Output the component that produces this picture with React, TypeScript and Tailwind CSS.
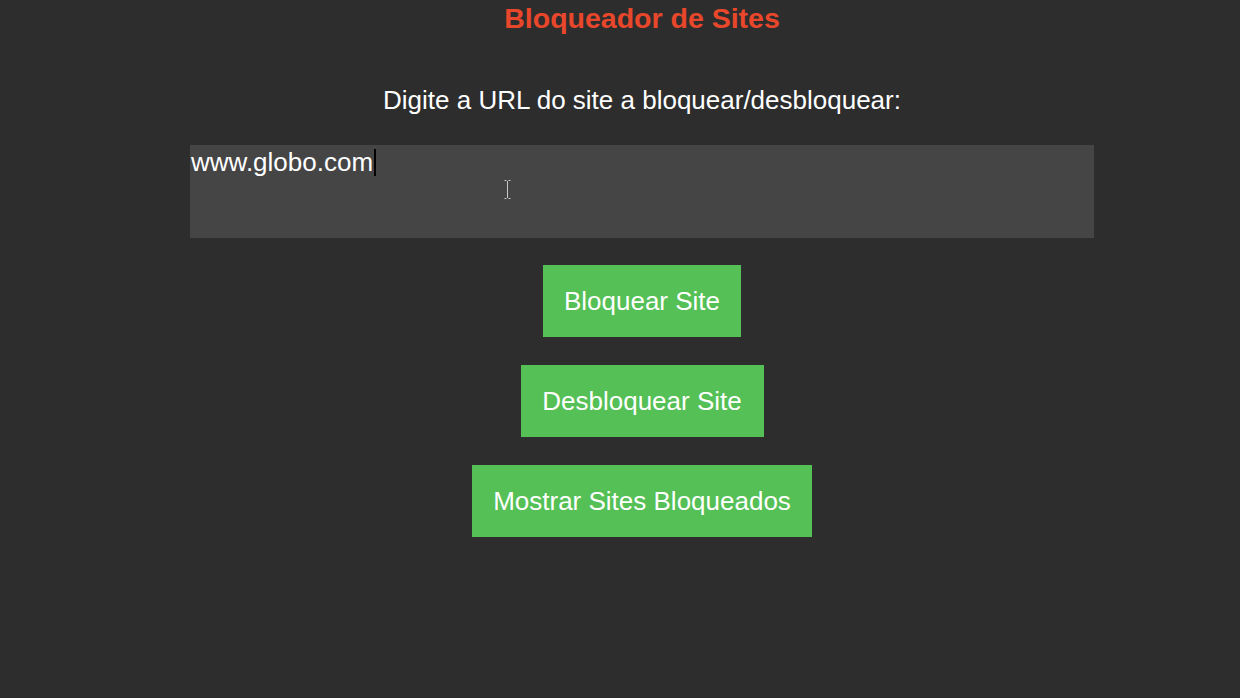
import React, { useState } from 'react';

const font = { fontFamily: '"Liberation Sans", Arial, sans-serif' };

const ActionButton: React.FC<{ label: string; width: string }> = ({ label, width }) => (
  <button
    className={`${width} h-[72px] bg-[#54c055] text-white text-[26px] leading-none flex items-center justify-center`}
  >
    {label}
  </button>
);

const App: React.FC = () => {
  const [url] = useState('www.globo.com');

  return (
    <div className="w-[1240px] h-[698px] bg-[#2d2d2d] overflow-hidden" style={font}>
      <div className="flex flex-col items-center pl-[44px]">
        <h1 className="h-[36px] leading-[36px] text-[28.5px] font-bold text-[#e8472b]">Bloqueador de Sites</h1>

        <p className="mt-[46px] h-[36px] leading-[36px] text-[26px] text-white">
          Digite a URL do site a bloquear/desbloquear:
        </p>

        <div className="relative mt-[27px] w-[904px] h-[93px] bg-[#454545]">
          <div className="flex items-center pt-[3px] pl-[1px] h-[32px] text-[26px] leading-[29px] text-white">
            <span>{url}</span>
            <span className="ml-[1px] w-[2px] h-[27px] bg-black" />
          </div>
          {/* mouse pointer */}
          <svg className="absolute left-[314px] top-[35px]" width="7" height="19" viewBox="0 0 7 19">
            <path d="M0.5 0.5h2M4.5 0.5h2M3.5 1v17M0.5 18.5h2M4.5 18.5h2" stroke="#c8c8c8" strokeWidth="1" fill="none" />
          </svg>
        </div>

        <div className="mt-[27px] flex flex-col items-center gap-[28px]">
          <ActionButton label="Bloquear Site" width="w-[198px]" />
          <ActionButton label="Desbloquear Site" width="w-[243px]" />
          <ActionButton label="Mostrar Sites Bloqueados" width="w-[340px]" />
        </div>
      </div>
    </div>
  );
};

export default App;
